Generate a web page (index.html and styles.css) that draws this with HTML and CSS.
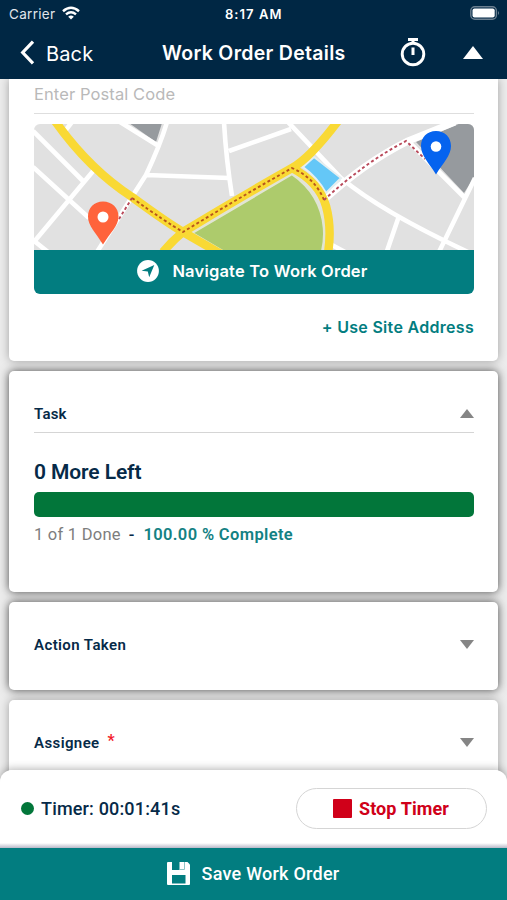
FILE: index.html
```html
<!DOCTYPE html>
<html lang="en">
<head>
<meta charset="utf-8">
<title>Work Order Details</title>
<link rel="stylesheet" href="styles.css">
</head>
<body>
<div class="app">
  <header class="top">
    <div class="status">
      <span class="carrier">Carrier</span>
      <svg class="wifi" width="18" height="14" viewBox="0 0 18 14"><g fill="none" stroke="#fff" stroke-width="2.5"><path d="M1 5.2Q9-1.6 17 5.2"/><path d="M4 8.4Q9 4.2 14 8.4"/></g><path d="M6.2 10.7Q9 8.5 11.8 10.7L9 13.5z" fill="#fff"/></svg>
      <span class="clock">8:17 AM</span>
      <svg class="battery" width="30" height="14" viewBox="0 0 30 14"><rect x=".8" y=".8" width="25.6" height="12.4" rx="4" fill="none" stroke="#6b7f90" stroke-width="1.4"/><rect x="2.5" y="2.5" width="22.2" height="9" rx="2" fill="#fff"/><path d="M28 5q2 2 0 4z" fill="#6b7f90"/></svg>
    </div>
    <div class="nav">
      <svg class="chevron" width="15" height="25" viewBox="0 0 15 25"><path d="M13 1.7L2.7 12.5L13 23.3" fill="none" stroke="#fff" stroke-width="3.2"/></svg>
      <span class="back">Back</span>
      <h1 class="title">Work Order Details</h1>
      <svg class="stopwatch" width="26" height="30" viewBox="0 0 26 30"><circle cx="13" cy="17" r="10.8" fill="none" stroke="#fff" stroke-width="2.9"/><path d="M8 2.4h10M13 3v4M13 10.500v7.500" stroke="#fff" stroke-width="3" fill="none"/></svg>
      <svg class="collapse" width="20" height="13" viewBox="0 0 20 13"><path d="M10 0L20 13H0z" fill="#fff"/></svg>
    </div>
  </header>

  <main class="content">
    <section class="card address">
      <div class="postal"><span>Enter Postal Code</span></div>
      <div class="map-box">
        <svg class="map" width="440" height="126" viewBox="0 0 440 126">
          <rect width="440" height="126" fill="#e1e1e1"/>
          <path d="M95-1H128L122 18zM382 18L427-1H441V52L430 69z" fill="#969a9e"/>
          <g fill="none" stroke="#fff" stroke-width="4.600">
            <path d="M-1 7L50 58M-1 43L55 94M-1 119L60 46M31 7L38-2M-1 116L14 128"/>
            <path d="M86-2L123 21M133-2Q127 19 112 51L96 76L63 128M112 51L195 54M190-2Q192 34 198 72M195 27L257 5"/>
            <path d="M254-2L307 54Q348 88 434 128M365 92L353 127M441 54L405 128M374 17L431 74M298 121L311 128"/>
            <path d="M290 76Q330 39 374 17L421-2" stroke-width="7"/>
          </g>
          <path d="M280 33L307 54L292 69Q284 54 269 43z" fill="#64c7f7" stroke="#e5eef0" stroke-width="2"/>
          <path d="M158 109L258 50Q287 70 290 104Q291 116 288 128H190z" fill="#adcb6c" stroke="#e1e5d4" stroke-width="2.5"/>
          <g fill="none" stroke="#f9d934" stroke-width="8.5" stroke-linejoin="round">
            <path d="M21-3Q55 45 98 73Q132 98 149 108L187 130"/>
            <path d="M129 128Q138 117 149 108Q203 75 258 44Q276 34 304-3"/>
            <path d="M258 44Q285 58 292 82Q298 104 294 129"/>
          </g>
          <path d="M98 74Q132 98 149 108Q203 75 258 44Q281 54 290 76" fill="none" stroke="#b8541d" stroke-width="1.9" stroke-dasharray="3 2.5"/>
          <path d="M85 95L98 74M290 76Q330 39 372 17L391 35" fill="none" stroke="#b94a5b" stroke-width="1.9" stroke-dasharray="3 2.5"/>
          <path d="M69 77.5C60 77.5 54 84 54 92.5C54 102 62 109 69 120.5C76 109 84.500 102 84.500 92.500C84.500 84 78 77.500 69 77.500z" fill="#ff633b"/><circle cx="69" cy="93" r="5.500" fill="#fff"/>
          <path d="M402 7C393 7 387 13.500 387 22C387 31.500 395 39 402 50.500C409 39 417 31.500 417 22C417 13.500 411 7 402 7z" fill="#0563ef"/><circle cx="402" cy="22.500" r="5.300" fill="#fff"/>
        </svg>
        <div class="navigate">
          <svg width="22" height="22" viewBox="0 0 22 22"><circle cx="11" cy="11" r="10.900" fill="#fff"/><path d="M17.300 4.900L12.200 17.300L10.800 11.600L4.600 10.700z" fill="#027d80"/></svg>
          <span class="navigate-text">Navigate To Work Order</span>
        </div>
      </div>
      <div class="site-row"><span class="site">+ Use Site Address</span></div>
    </section>

    <section class="card task">
      <div class="card-head ruled"><span class="label l-task">Task</span><svg width="14" height="9" viewBox="0 0 14 9"><path d="M7 0L14 9H0z" fill="#858585"/></svg></div>
      <h2 class="left"><span>0 More Left</span></h2>
      <div class="bar"></div>
      <div class="progress"><span class="done">1 of 1 Done</span><span class="dash">-</span><span class="complete">100.00 % Complete</span></div>
    </section>

    <section class="card action">
      <div class="card-head"><span class="label l-action">Action Taken</span><svg width="14" height="9" viewBox="0 0 14 9"><path d="M0 0H14L7 9z" fill="#858585"/></svg></div>
    </section>

    <section class="card assignee">
      <div class="card-head"><span class="label l-assignee">Assignee</span><span class="star">*</span><svg width="14" height="9" viewBox="0 0 14 9"><path d="M0 0H14L7 9z" fill="#858585"/></svg></div>
    </section>
  </main>

  <footer class="bottom">
    <div class="timer-bar">
      <i class="dot"></i><span class="timer">Timer: 00:01:41s</span>
      <div class="stop"><i class="square"></i><span class="stop-text">Stop Timer</span></div>
    </div>
    <div class="save">
      <svg width="23" height="23" viewBox="0 0 23 23"><path d="M1 0H20.500L23 2.500V22Q23 23 22 23H1Q0 23 0 22V1Q0 0 1 0z" fill="#fff"/><path d="M5 0H12.500V8H5zM5 13H18.500V21.500H5z" fill="#027d80"/><path d="M17.500 0V7.500H13" fill="none" stroke="#8fc5c6" stroke-width="1"/></svg>
      <span class="save-text">Save Work Order</span>
    </div>
  </footer>
</div>
</body>
</html>
```
FILE: styles.css
```css
* { box-sizing: border-box; }
body { margin: 0; }
.app {
  width: 507px; height: 900px; overflow: hidden;
  display: flex; flex-direction: column;
  background: #ececec; color: #062a48;
  font-family: Roboto, sans-serif;
}
svg { display: block; flex: none; }
span { white-space: nowrap; }

.top { flex: none; height: 79px; background: #002744; color: #fff; font-family: Inter, sans-serif; z-index: 2; }
.status { height: 27px; display: grid; grid-template-columns: 53px 172px 1fr 30px; align-items: center; padding: 0 6px 0 9px; font-size: 13.5px; }
.wifi { margin-top: -1px; }
.battery { margin-left: -1px; margin-top: -1px; }
.carrier { color: #e1e6eb; letter-spacing: .3px; }
.clock { margin: 1px 0 0 -9px; font-weight: 600; font-size: 13px; letter-spacing: 1.05px; }
.nav { height: 52px; display: flex; align-items: center; padding: 0 24px 2px 20px; }
.back { margin: 4px 0 0 11px; width: 116px; font-size: 20px; letter-spacing: .15px; }
.title { margin: 1px 0 0; width: 238px; font-size: 19.5px; font-weight: 600; white-space: nowrap; letter-spacing: .3px; }
.stopwatch { margin-top: -1px; }
.collapse { margin-left: auto; }

.content { flex: 1; min-height: 0; padding: 0 9px; display: flex; flex-direction: column; gap: 10px; }
.card { flex: none; background: #fff; border-radius: 5px; padding: 0 24px 0 25px; box-shadow: 0 0 10px rgba(0,0,0,.7); }
.address { height: 282px; border-radius: 0 0 5px 5px; box-shadow: 0 0 10px rgba(0,0,0,.32); }
.postal { height: 35px; border-bottom: 1px solid #dedede; color: #b9b9b9; font: 16.500px/31px Inter, sans-serif; letter-spacing: .1px; }
.map-box { margin-top: 10px; height: 170px; border-radius: 6px; overflow: hidden; }
.navigate { height: 44px; background: #027d80; color: #fff; display: flex; justify-content: center; align-items: center; gap: 13px; font: 600 16.5px Inter, sans-serif; letter-spacing: .2px; padding: 0 3px 2px 0; }
.site-row { display: flex; justify-content: flex-end; margin-top: 23px; font: 600 16px/21px Inter, sans-serif; letter-spacing: .3px; color: #027d80; }

.task { height: 221px; }
.card-head { display: flex; align-items: center; height: 88px; }
.card-head svg { margin-left: auto; }
.action .card-head { padding-bottom: 3px; }
.ruled { height: 62px; padding-top: 23px; border-bottom: 1px solid #d5d5d5; }
.label { font-size: 15px; font-weight: 600; letter-spacing: .4px; }
.l-task { margin-top: 2px; letter-spacing: .2px; }
.left { margin: 27px 0 0; font-size: 21px; line-height: 25px; font-weight: 600; letter-spacing: -.1px; }
.bar { height: 25px; margin-top: 7px; border-radius: 5px; background: #02763a; }
.progress { display: flex; margin-top: 8px; font-size: 16.5px; line-height: 20px; }
.done { color: #7d7d7d; letter-spacing: .25px; }
.dash { margin: 0 9px 0 8px; font-weight: 500; }
.complete { color: #138183; font-weight: 600; letter-spacing: .36px; }
.action { height: 88px; }
.assignee { height: 100px; box-shadow: 0 0 10px rgba(0,0,0,.32); }
.assignee .card-head { height: 85px; }
.star { margin: -4px 0 0 8px; color: #f3202b; font-size: 16px; font-weight: 600; }

.bottom { flex: none; height: 130px; z-index: 2; }
.timer-bar { height: 78px; background: linear-gradient(#fff 73px, #b8b8c8 78px); border-radius: 12px 12px 0 0; box-shadow: 0 -1px 9px rgba(0,0,0,.3); display: flex; align-items: center; padding: 0 20px 2px 21px; }
.dot { width: 13px; height: 13px; border-radius: 50%; background: #02763a; }
.timer { margin-left: 7px; font-size: 18px; font-weight: 500; letter-spacing: .17px; }
.stop { margin-left: auto; width: 191px; height: 41px; border: 1px solid #d5d5d5; border-radius: 21px; display: flex; align-items: center; justify-content: center; gap: 7px; color: #d00019; font-size: 18px; font-weight: 700; letter-spacing: .1px; padding-right: 1px; }
.square { width: 19px; height: 19px; border-radius: 1px; background: #d00019; }
.save { height: 53px; padding: 0 1px 2px 0; background: #027d80; color: #fff; display: flex; align-items: center; justify-content: center; gap: 12px; font-size: 18px; font-weight: 500; letter-spacing: .25px; }
```
